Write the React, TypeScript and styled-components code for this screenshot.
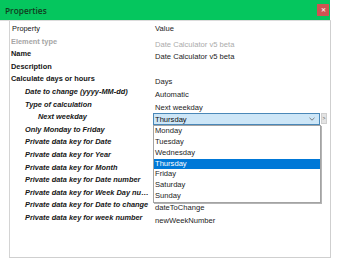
import { FC } from 'react';
import styled, { createGlobalStyle } from 'styled-components';

const GlobalStyle = createGlobalStyle`
    html, body {
        margin: 0;
        padding: 0;
        background: #ffffff;
    }
    body {
        font-family: "Liberation Sans", Arial, sans-serif;
        color: #1a1a1a;
    }
`

const WEEKDAYS = ['Monday', 'Tuesday', 'Wednesday', 'Thursday', 'Friday', 'Saturday', 'Sunday'];
const SELECTED_DAY = 'Thursday';

type PropRow = {
    label: string
    value?: string
    level: 0 | 1 | 2
    muted?: boolean
    combo?: boolean
}

const ROWS: PropRow[] = [
    { label: 'Element type', value: 'Date Calculator v5 beta', level: 0, muted: true },
    { label: 'Name', value: 'Date Calculator v5 beta', level: 0 },
    { label: 'Description', level: 0 },
    { label: 'Calculate days or hours', value: 'Days', level: 0 },
    { label: 'Date to change (yyyy-MM-dd)', value: 'Automatic', level: 1 },
    { label: 'Type of calculation', value: 'Next weekday', level: 1 },
    { label: 'Next weekday', level: 2, combo: true },
    { label: 'Only Monday to Friday', level: 1 },
    { label: 'Private data key for Date', level: 1 },
    { label: 'Private data key for Year', level: 1 },
    { label: 'Private data key for Month', level: 1 },
    { label: 'Private data key for Date number', level: 1 },
    { label: 'Private data key for Week Day number', level: 1 },
    { label: 'Private data key for Date to change', value: 'dateToChange', level: 1 },
    { label: 'Private data key for week number', value: 'newWeekNumber', level: 1 },
];

const INDENT = [1, 15, 28];

const Window = styled.div`
    width: 331px;
    display: flex;
    flex-direction: column;
`

const TitleBar = styled.div`
    height: 20px;
    width: 330px;
    background: #05c65e;
    display: flex;
    align-items: center;
    justify-content: space-between;
    padding: 0 1px 0 5px;
    box-sizing: border-box;
`

const Title = styled.span`
    font-family: "Open Sans", "Liberation Sans", sans-serif;
    font-weight: 600;
    font-size: 8.3px;
    color: #123b20;
`

const CloseButton = styled.div`
    width: 12px;
    height: 12px;
    background: #cf5452;
    color: #f4e4e4;
    font-size: 6px;
    line-height: 12px;
    text-align: center;
    font-weight: bold;
`

const Body = styled.div`
    border-top: 1px solid #dcdcdc;
    border-right: 1px solid #cfcfcf;
    height: 237px;
    display: flex;
`

const Grid = styled.div`
    margin-left: 9px;
    flex: 1;
    border-left: 1px solid #d4d4d4;
    border-bottom: 1px solid #cfcfcf;
    padding-top: 3px;
    display: flex;
    flex-direction: column;
`

const Row = styled.div`
    display: grid;
    grid-template-columns: 143px 1fr;
    height: 12.6px;
    align-items: start;
`

const Label = styled.div<{ $level: number; $muted?: boolean; $plain?: boolean }>`
    padding-left: ${p => INDENT[p.$level] + (p.$plain ? 1 : 0)}px;
    font-size: 7.4px;
    line-height: 10px;
    font-weight: ${p => (p.$plain ? 'normal' : 'bold')};
    font-style: ${p => (p.$level > 0 ? 'italic' : 'normal')};
    color: ${p => (p.$muted ? '#a6a6a6' : '#161616')};
    white-space: nowrap;
    overflow: hidden;
    text-overflow: ellipsis;
    padding-right: 2px;
`

const Value = styled.div<{ $muted?: boolean; $head?: boolean }>`
    padding-left: 2px;
    font-size: 7.6px;
    line-height: ${p => (p.$head ? 10 : 15)}px;
    color: ${p => (p.$muted ? '#ababab' : '#1c1c1c')};
    white-space: nowrap;
`

const EditorCell = styled.div`
    display: flex;
    gap: 1px;
    margin-top: 1px;
`

const ComboWrap = styled.div`
    position: relative;
    width: 167px;
`

const Combo = styled.div`
    height: 12px;
    box-sizing: border-box;
    background: #cde6f7;
    border: 1px solid #4a88b8;
    display: flex;
    align-items: center;
    justify-content: space-between;
    padding: 0 4px 0 1px;
    font-size: 7.6px;
    color: #111;
`

const MoreButton = styled.div`
    width: 6px;
    height: 11px;
    background: #e3e3e3;
    border: 1px solid #cfcfcf;
    box-sizing: border-box;
    font-size: 5px;
    line-height: 9px;
    text-align: center;
    color: #555;
`

const DropList = styled.div`
    position: absolute;
    top: 12px;
    left: 0;
    width: 168px;
    box-sizing: border-box;
    background: #fff;
    border: 1px solid #a3a3a3;
    box-shadow: 1px 1px 0 #b4b4b4;
    display: flex;
    flex-direction: column;
    z-index: 2;
`

const DropItem = styled.div<{ $active?: boolean }>`
    height: 10.8px;
    line-height: 10.8px;
    padding-left: 1px;
    font-size: 7.6px;
    background: ${p => (p.$active ? '#0078d7' : 'transparent')};
    color: ${p => (p.$active ? '#ffffff' : '#1c1c1c')};
`

const Chevron: FC = () => (
    <svg width="6" height="4" viewBox="0 0 6 4">
        <path d="M0.5 0.8 L3 3.2 L5.5 0.8" fill="none" stroke="#707070" strokeWidth="0.9" />
    </svg>
)

const WeekdayEditor: FC = () => (
    <EditorCell>
        <ComboWrap>
            <Combo>
                <span>{SELECTED_DAY}</span>
                <Chevron />
            </Combo>
            <DropList>
                {WEEKDAYS.map(day => (
                    <DropItem key={day} $active={day === SELECTED_DAY}>{day}</DropItem>
                ))}
            </DropList>
        </ComboWrap>
        <MoreButton>&gt;</MoreButton>
    </EditorCell>
)

const App: FC = () => {
    return (
        <Window>
            <GlobalStyle />
            <TitleBar>
                <Title>Properties</Title>
                <CloseButton>✕</CloseButton>
            </TitleBar>
            <Body>
                <Grid>
                    <Row>
                        <Label $level={0} $plain>Property</Label>
                        <Value $head>Value</Value>
                    </Row>
                    {ROWS.map(row => (
                        <Row key={row.label}>
                            <Label $level={row.level} $muted={row.muted}>{row.label}</Label>
                            {row.combo
                                ? <WeekdayEditor />
                                : <Value $muted={row.muted}>{row.value}</Value>}
                        </Row>
                    ))}
                </Grid>
            </Body>
        </Window>
    )
}

export default App
